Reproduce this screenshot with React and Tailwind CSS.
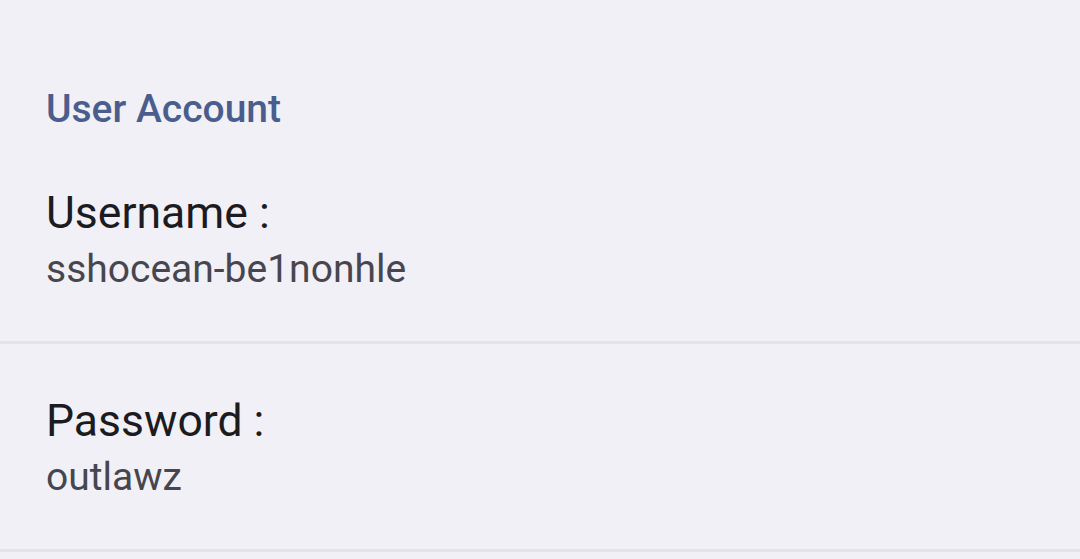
import React from 'react';

const items = [
  { label: 'Username :', value: 'sshocean-be1nonhle' },
  { label: 'Password :', value: 'outlawz' },
];

export default function App() {
  return (
    <div className="min-h-screen w-[1080px] h-[559px] overflow-hidden bg-[#f1f0f6]" style={{ fontFamily: 'Roboto, "Noto Sans", sans-serif' }}>
      <div className="pt-[86px] px-[46px] pb-[4px]">
        <h2 className="text-[39px] leading-[46px] font-medium text-[#4a5e8d]">User Account</h2>
      </div>
      {items.map((it) => (
        <div key={it.label} className="border-b-[3px] border-[#e4e3ea]">
          <div className="px-[46px] pt-[48px] pb-[45px]">
            <div className="text-[44.5px] leading-[59px] text-[#1c1b20]">{it.label}</div>
            <div className="text-[39px] leading-[53px] text-[#47464e]">{it.value}</div>
          </div>
        </div>
      ))}
    </div>
  );
}
